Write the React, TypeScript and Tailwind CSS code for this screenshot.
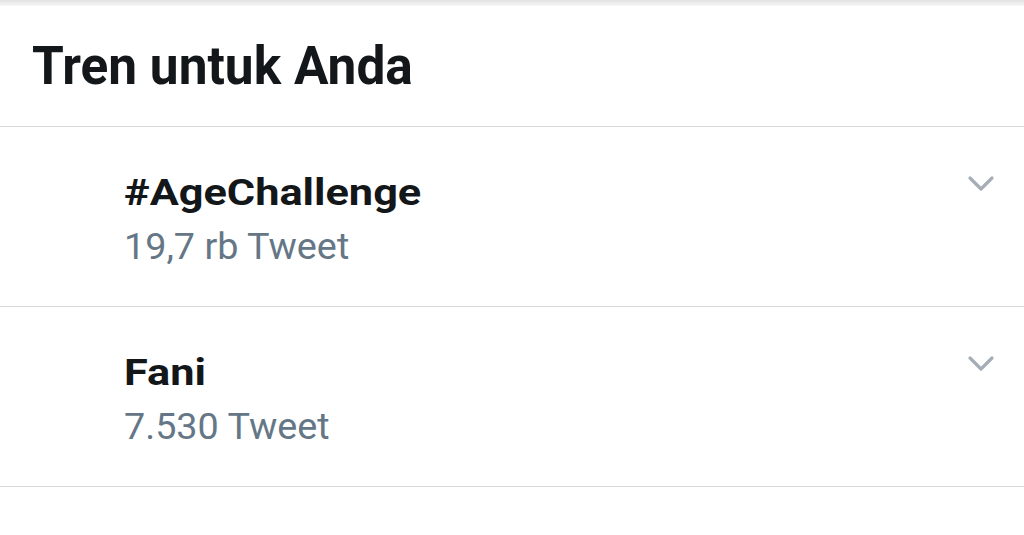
import React from "react";

const Chevron = () => (
  <svg width="28" height="20" viewBox="0 0 28 20" fill="none">
    <path d="M3 4 L14 15 L25 4" stroke="#a5aeb7" strokeWidth="3.2" strokeLinecap="round" strokeLinejoin="round" />
  </svg>
);

export default function App() {
  return (
    <div className="w-[1024px] h-[535px] bg-white overflow-hidden" style={{ fontFamily: "Roboto, 'Noto Sans', sans-serif" }}>
      <div className="h-[6px] bg-gradient-to-b from-[#e2e2e2] to-[#f7f7f7]"></div>
      <div className="h-[121px] border-b border-[#d9d9d9] pl-[32px] pt-[34px]">
        <div className="inline-block text-[53px] font-bold text-[#14171a] leading-[53px] origin-left scale-x-[0.97]">Tren untuk Anda</div>
      </div>
      {[
        { title: "#AgeChallenge", count: "19,7 rb Tweet" },
        { title: "Fani", count: "7.530 Tweet" },
      ].map((r) => (
        <div key={r.title} className="h-[180px] border-b border-[#d9d9d9] pl-[124px] pr-[29px] flex">
          <div className="flex-1 pt-[39px]">
            <div className="h-[54px]">
              <span className="inline-block text-[37px] leading-[54px] font-bold text-[#14171a] origin-left scale-x-[1.17]">{r.title}</span>
            </div>
            <div className="h-[54px]">
              <span className="inline-block text-[37px] leading-[54px] text-[#657786] origin-left scale-x-[1.02]">{r.count}</span>
            </div>
          </div>
          <div className="pt-[47px]"><Chevron /></div>
        </div>
      ))}
    </div>
  );
}
